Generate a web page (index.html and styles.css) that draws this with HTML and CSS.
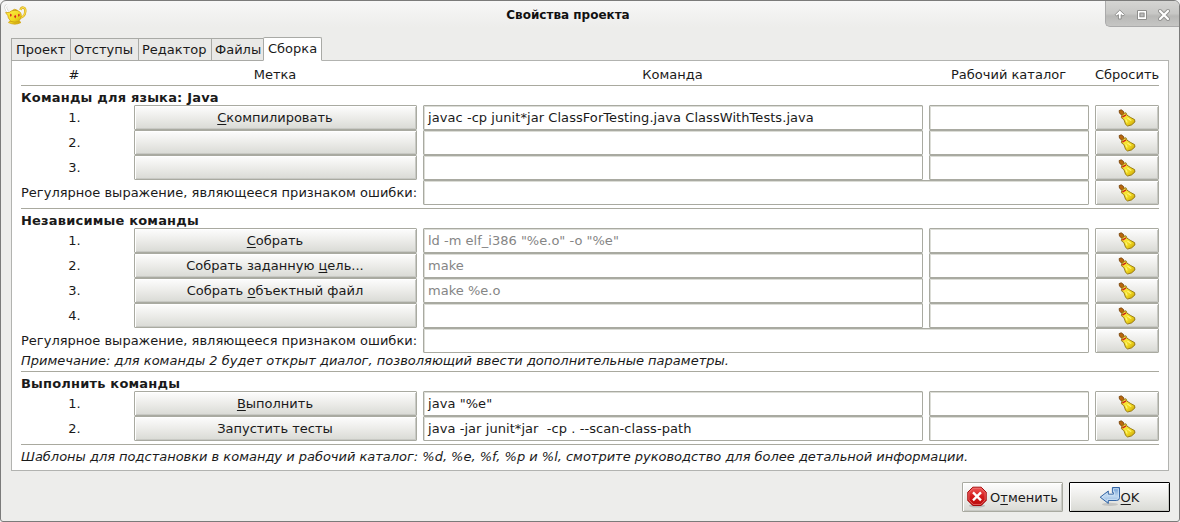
FILE: index.html
```html
<!DOCTYPE html>
<html lang="ru">
<head>
<meta charset="utf-8">
<title>Свойства проекта</title>
<link rel="stylesheet" href="styles.css">
</head>
<body>
<svg class="defs" width="0" height="0">
  <defs>
    <linearGradient id="gold" x1="0" y1="0" x2="1" y2="1"><stop offset="0" stop-color="#fff04a"/><stop offset=".6" stop-color="#f0d820"/><stop offset="1" stop-color="#c49d08"/></linearGradient>
    <linearGradient id="red" x1="0" y1="0" x2="0" y2="1"><stop offset="0" stop-color="#f05a5a"/><stop offset=".5" stop-color="#d41c1c"/><stop offset="1" stop-color="#b80808"/></linearGradient>
    <linearGradient id="blue" x1="0" y1="0" x2="0" y2="1"><stop offset="0" stop-color="#6b9bd2"/><stop offset=".55" stop-color="#c0d8f0"/><stop offset="1" stop-color="#7fa9d8"/></linearGradient>
    <symbol id="broom" viewBox="0 0 18 18">
      <path d="M1.1 1.6 3.2.8 5.4 2.3 6.6 5.6 4.4 6.8 1.5 4.2Z" fill="#b8670c" stroke="#744009" stroke-width=".8"/>
      <path d="M6.4 4.2 8 3.8 9 6.2 12.8 8.6 16.6 10.6 16.9 13 13.6 15.9 9.6 17 7.6 15.4 5.9 10.6 3.4 8.8 3.6 7Z" fill="url(#gold)" stroke="#907311" stroke-width=".9"/>
      <path d="M4.3 8.2 8 5.9" stroke="#cc2417" stroke-width="1.5"/>
      <path d="M7.6 10.2 9.2 13.4M9.4 9 13.2 11.6" stroke="#fff778" stroke-width="1.1"/>
    </symbol>
  </defs>
</svg>
<div class="window">
  <header class="titlebar">
    <svg class="app-icon" width="24" height="24" viewBox="0 0 24 24">
      <path d="M3 2.5C1 3 1.5 7 4 9" fill="none" stroke="#c9c9c4" stroke-width="2.6"/>
      <path d="M3 2.5C1 3 1.5 7 4 9" fill="none" stroke="#fff" stroke-width="1.4"/>
      <path d="M16.5 7C17 3.5 21.8 3.5 21.3 8.5 21 12.8 18 14.5 16 14.5" fill="none" stroke="#d8ac18" stroke-width="2.4"/>
      <path d="M16.5 7C17 3.5 21.8 3.5 21.3 8.5 21 12.8 18 14.5 16 14.5" fill="none" stroke="#f9df55" stroke-width="1.1"/>
      <path d="M1.6 9.6 5.2 9.5Q6.5 7.5 10.8 7.3 16.8 7.4 17.3 12 17 16.5 15 17.7L17 19.5Q11 22.7 4.5 19.6L6.2 17.4Q3.8 15 3.8 12.6Z" fill="url(#gold)" stroke="#d5a513" stroke-width=".8"/>
      <path d="M8.5 7.4Q10.5 5 13.4 7.4Z" fill="#f7df42" stroke="#c79613" stroke-width=".7"/>
      <path d="m6.8 10.4 1 1.6-1 2-1-2zm4.4 1.4 1.1 1.7-1.1 1.9-1.1-1.9zM15 10.4l.8 1.6-1 2-.9-1.9z" fill="#d72222"/>
      <path d="M6 18.2Q11 20.2 15.6 18.2" fill="none" stroke="#d0a516"/>
    </svg>
    <h1 class="title">Свойства проекта</h1>
    <div class="controls">
      <svg width="72" height="26" viewBox="0 0 72 26" stroke-linejoin="round">
        <path d="M13.8 9 18.5 13.6 17 15.1 15.2 13.7V18H12.4V13.7L10.6 15.1 9.1 13.6Z" fill="#fff" stroke="#8e8e8c"/>
        <rect x="31.5" y="9.5" width="9" height="9" fill="#fff" stroke="#8e8e8c"/>
        <rect x="33.9" y="12" width="4.2" height="3.8" fill="#bbb" stroke="#8e8e8c" stroke-width="1.1"/>
        <path d="m54 10 8 8m0-8-8 8" stroke="#91918f" stroke-width="4" stroke-linecap="round"/>
        <path d="m54 10 8 8m0-8-8 8" stroke="#fff" stroke-width="2.2" stroke-linecap="round"/>
      </svg>
    </div>
  </header>

  <main class="content">
    <nav class="tabs">
      <span class="tab tab-project">Проект</span><span class="tab tab-indent">Отступы</span><span class="tab tab-editor">Редактор</span><span class="tab tab-files">Файлы</span><span class="tab tab-build active">Сборка</span>
    </nav>
    <section class="panel">
      <div class="row head"><span>#</span><span>Метка</span><span>Команда</span><span>Рабочий каталог</span><span>Сбросить</span></div>
      <hr class="rule">
      <h2 class="heading">Команды для языка: Java</h2>
      <div class="row"><span>1.</span><button class="button"><span><u>С</u>компилировать</span></button><div class="field">javac -cp junit*jar ClassForTesting.java ClassWithTests.java</div><div class="field"></div><button class="button"><svg class="broom"><use href="#broom"/></svg></button></div>
      <div class="row"><span>2.</span><button class="button"></button><div class="field"></div><div class="field"></div><button class="button"><svg class="broom"><use href="#broom"/></svg></button></div>
      <div class="row"><span>3.</span><button class="button"></button><div class="field"></div><div class="field"></div><button class="button"><svg class="broom"><use href="#broom"/></svg></button></div>
      <div class="row regex"><span>Регулярное выражение, являющееся признаком ошибки:</span><div class="field"></div><button class="button"><svg class="broom"><use href="#broom"/></svg></button></div>
      <hr class="rule">
      <h2 class="heading">Независимые команды</h2>
      <div class="row"><span>1.</span><button class="button"><span><u>С</u>обрать</span></button><div class="field hint">ld -m elf_i386 "%e.o" -o "%e"</div><div class="field"></div><button class="button"><svg class="broom"><use href="#broom"/></svg></button></div>
      <div class="row"><span>2.</span><button class="button"><span>Собрать заданную <u>ц</u>ель...</span></button><div class="field hint">make</div><div class="field"></div><button class="button"><svg class="broom"><use href="#broom"/></svg></button></div>
      <div class="row"><span>3.</span><button class="button"><span>Собрать <u>о</u>бъектный файл</span></button><div class="field hint">make %e.o</div><div class="field"></div><button class="button"><svg class="broom"><use href="#broom"/></svg></button></div>
      <div class="row"><span>4.</span><button class="button"></button><div class="field"></div><div class="field"></div><button class="button"><svg class="broom"><use href="#broom"/></svg></button></div>
      <div class="row regex"><span>Регулярное выражение, являющееся признаком ошибки:</span><div class="field"></div><button class="button"><svg class="broom"><use href="#broom"/></svg></button></div>
      <p class="note">Примечание: для команды 2 будет открыт диалог, позволяющий ввести дополнительные параметры.</p>
      <hr class="rule">
      <h2 class="heading">Выполнить команды</h2>
      <div class="row"><span>1.</span><button class="button"><span><u>В</u>ыполнить</span></button><div class="field">java "%e"</div><div class="field"></div><button class="button"><svg class="broom"><use href="#broom"/></svg></button></div>
      <div class="row"><span>2.</span><button class="button"><span>Запустить тесты</span></button><div class="field">java -jar junit*jar  -cp . --scan-class-path</div><div class="field"></div><button class="button"><svg class="broom"><use href="#broom"/></svg></button></div>
      <hr class="rule">
      <p class="note footnote">Шаблоны для подстановки в команду и рабочий каталог: %d, %e, %f, %p и %l, смотрите руководство для более детальной информации.</p>
    </section>
    <footer class="actions">
      <button class="button action">
        <svg width="22" height="22" viewBox="0 0 22 22"><ellipse cx="11" cy="19.8" rx="8" ry="1.8" fill="#999" opacity=".5"/><path d="M6.8 1.2h8.4l5 5v8.3l-5 5H6.8l-5-5V6.2Z" fill="url(#red)" stroke="#a30b0b"/><path d="M7.2 2.3h7.6l4.3 4.3V14l-4.3 4.4H7.2L2.9 14V6.6Z" fill="none" stroke="#ef7777" stroke-width=".8"/><path d="m7 6.4 8 8m0-8-8 8" stroke="#fff" stroke-width="2.3"/></svg>
        <span>О<u>т</u>менить</span>
      </button>
      <button class="button action default">
        <svg width="22" height="22" viewBox="0 0 22 22"><ellipse cx="11" cy="18.4" rx="8" ry="1.6" fill="#999" opacity=".4"/><path d="M13.4 1.5H20.5V11.6Q20.5 14.5 17.6 14.5H9.3V17.4L1.2 11.2 9.3 5V8.2H14.4V6.6H13.4Z" fill="url(#blue)" stroke="#3465a4"/><path d="M14.5 2.7h4.9v8.7q0 2-2 2H8.3v1.8L3 11.2 8.3 7.2v2.1h7.1V5.6h-1Z" fill="none" stroke="#d2e4f6" stroke-width=".8"/></svg>
        <span><u>O</u>K</span>
      </button>
    </footer>
  </main>
</div>
</body>
</html>
```

FILE: styles.css
```css
* { box-sizing: border-box; }
body {
  margin: 0;
  background: #f4f4f4;
  color: #1a1a1a;
  font: 13px/15px "DejaVu Sans", sans-serif;
}
.defs { position: absolute; }
.window {
  width: 1180px;
  height: 522px;
  border: 1px solid #7b7b7a;
  border-radius: 6px 6px 3px 3px;
  background: linear-gradient(#f7f7f7, #ededeb 26px);
  overflow: hidden;
}
.titlebar {
  display: grid;
  grid-template-columns: 30px 1fr 74px;
  height: 26px;
}
.app-icon { margin: 2px 0 0 3px; }
.title {
  margin: 7px 0 0;
  font-size: 12px;
  line-height: 15px;
  text-align: center;
  color: #111;
}
.controls {
  height: 26px;
  border-left: 1px solid #aaa;
  border-bottom: 1px solid #aaa;
  border-bottom-left-radius: 5px;
  background: linear-gradient(#d5d5d3, #c7c7c5 50%, #b8b8b6 60%, #c6c6c4);
}
.controls svg { display: block; }
.content { padding: 10px 10px 0; }
.tabs {
  display: flex;
  align-items: flex-end;
  height: 24px;
}
.tab {
  height: 23px;
  padding: 3px 0 0 4px;
  border: 1px solid #a9aaa6;
  border-right: 0;
  background: #e9e9e7;
  white-space: nowrap;
}
.tab-project { width: 59px; }
.tab-indent { width: 68px; padding-left: 3px; }
.tab-editor { width: 73px; padding-left: 3px; }
.tab-files { width: 52px; padding-left: 3px; }
.tab-build { width: 59px; }
.tab.active {
  position: relative;
  height: 24px;
  border-right: 1px solid #a9aaa6;
  border-bottom-color: #fff;
  border-radius: 2px 2px 0 0;
  background: #fff;
}
.panel {
  height: 411px;
  margin-top: -1px;
  padding: 6px 9px 0;
  border: 1px solid #b2b3b0;
  background: #fff;
}
.row {
  display: grid;
  grid-template-columns: 107px 283px 500px 160px 64px;
  column-gap: 6px;
  height: 25px;
  align-items: center;
  text-align: center;
  white-space: nowrap;
}
.row.head { height: 15px; }
.head > span { margin-right: 1px; }
.row.regex { grid-template-columns: 396px 666px 64px; }
.regex > span { text-align: left; letter-spacing: .01px; }
.rule {
  height: 8px;
  margin: 0;
  padding: 0;
  border: 0;
  background: linear-gradient(#a9a99f, #a9a99f) 0 3px / 100% 1px no-repeat;
}
.heading, .note {
  height: 15px;
  margin: 0;
  font-size: 13px;
  white-space: nowrap;
}
.heading { letter-spacing: .19px; }
.note { font-style: italic; letter-spacing: .01px; }
.footnote { letter-spacing: -.015px; }
.button {
  display: flex;
  align-items: center;
  justify-content: center;
  height: 25px;
  padding: 0 1px 0 0;
  border: 1px solid #a9aaa1;
  border-radius: 1px;
  background: linear-gradient(#fdfdfd, #ecece9 50%, #d9dad5);
  box-shadow: inset 1px 1px #fff, inset -1px -1px #c8c9c4;
  color: inherit;
  font: inherit;
  white-space: pre;
}
u {
  text-decoration-thickness: 1px;
  text-underline-offset: 2px;
  text-decoration-skip-ink: none;
}
.field {
  height: 25px;
  padding: 4px 4px 0;
  border: 1px solid #a9aaa1;
  border-radius: 1px;
  background: #fff;
  box-shadow: inset 1px 1px #dcddd7;
  letter-spacing: .06px;
  text-align: left;
  white-space: pre;
}
.hint { color: #858585; letter-spacing: .01px; }
.broom { width: 18px; height: 18px; }
.actions {
  display: flex;
  justify-content: flex-end;
  gap: 6px;
  margin-right: -1px;
  padding-top: 11px;
}
.action { width: 101px; height: 30px; gap: 2px; }
.action.default { border-color: #000; gap: 0; }
```
